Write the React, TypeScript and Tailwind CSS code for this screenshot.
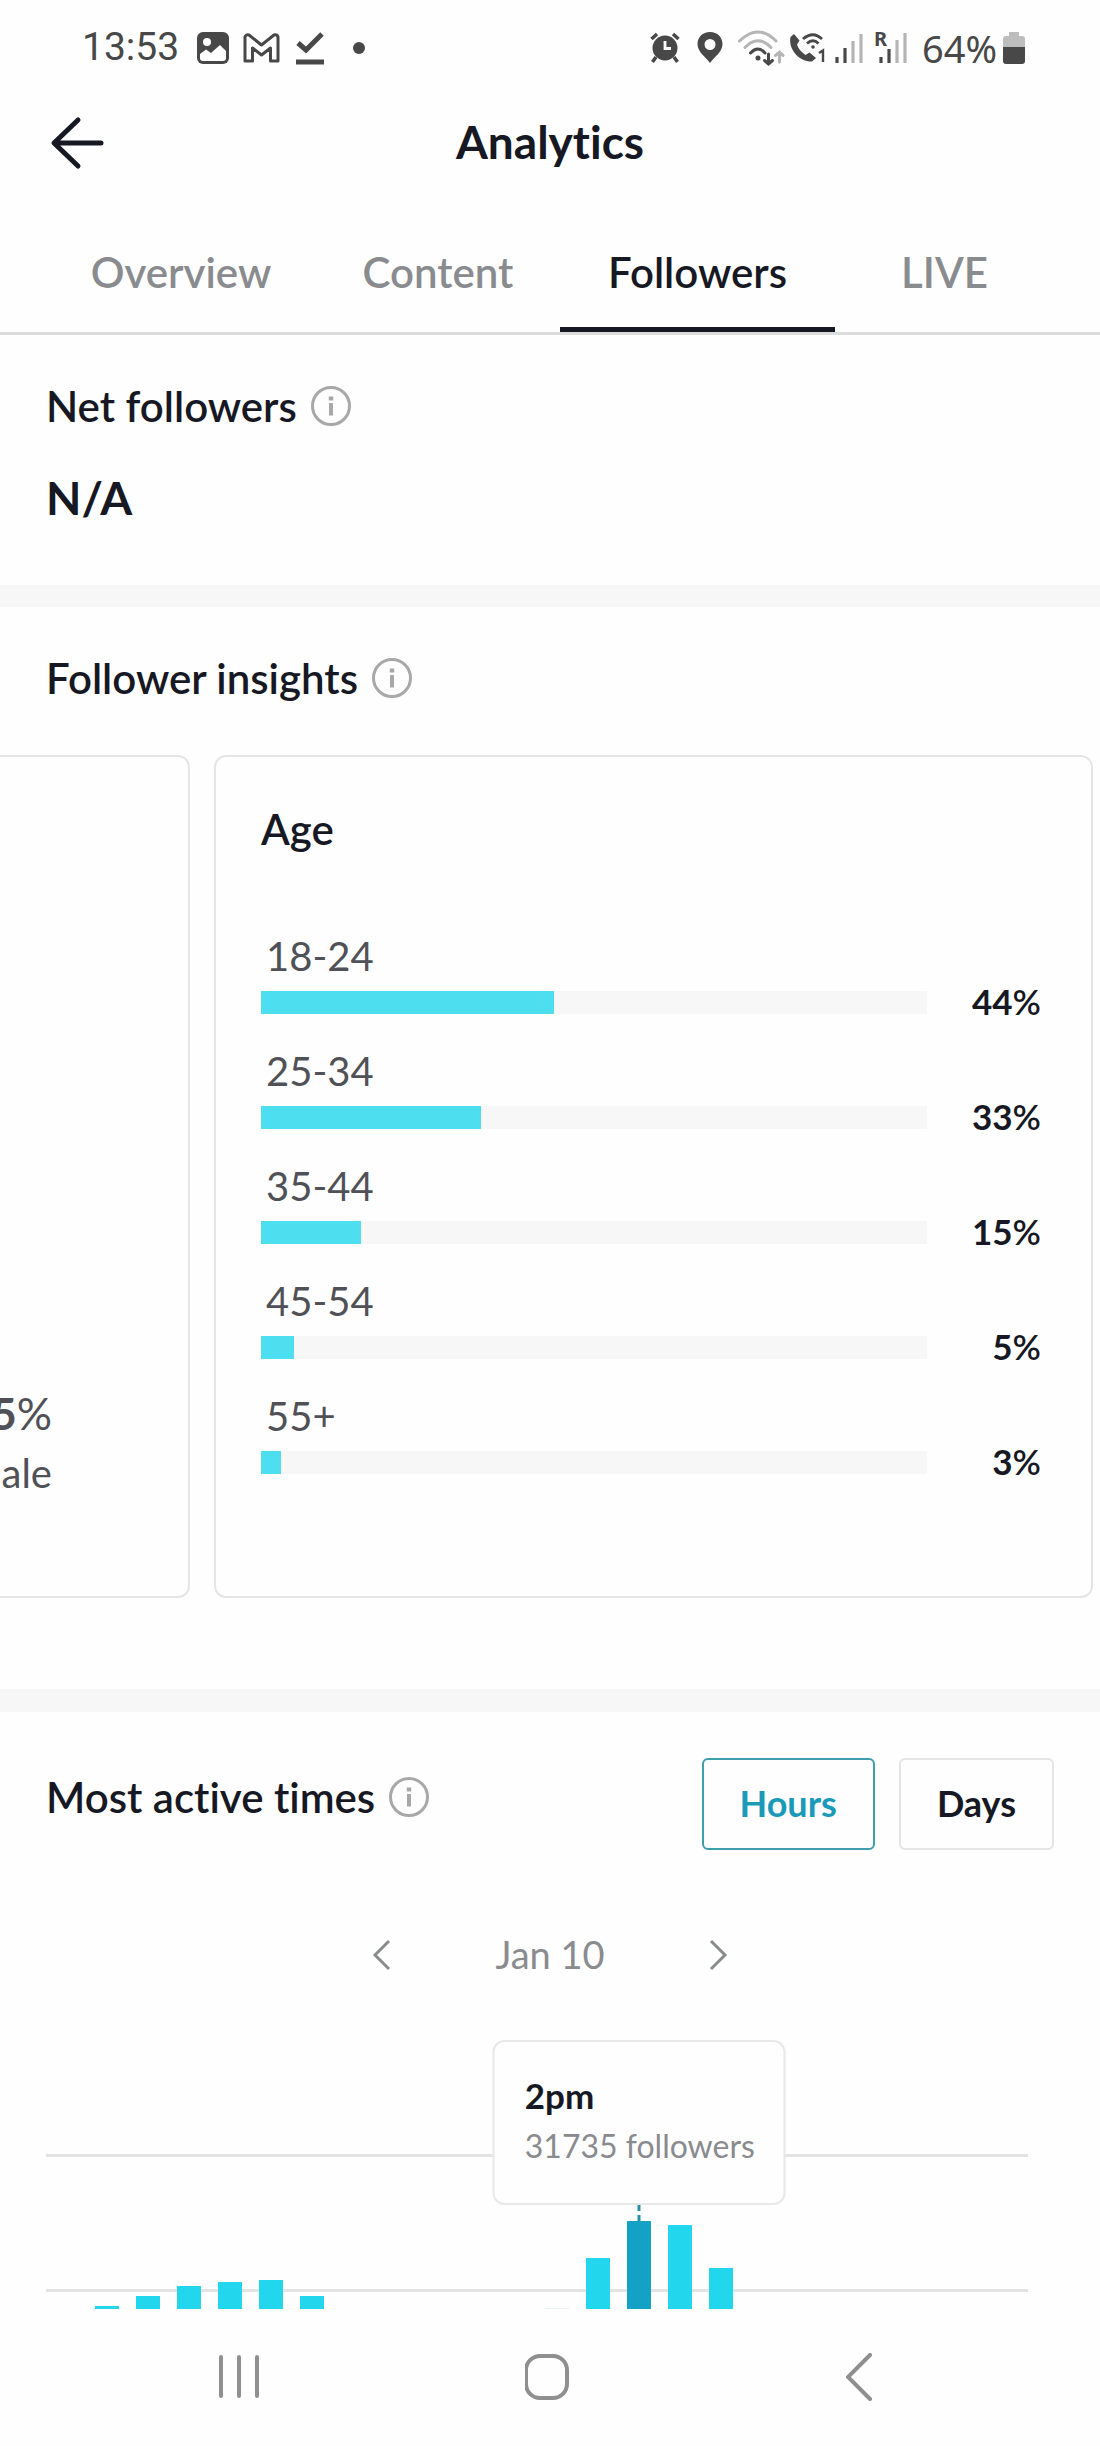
import { useState } from 'react'
import type { ReactNode } from 'react'

interface AgeGroup {
  label: string
  percent: number
}

interface HourBar {
  hour: number
  height: number
  tone: 'normal' | 'active' | 'faint'
}

const tabs = ['Overview', 'Content', 'Followers', 'LIVE']

const ageGroups: AgeGroup[] = [
  { label: '18-24', percent: 44 },
  { label: '25-34', percent: 33 },
  { label: '35-44', percent: 15 },
  { label: '45-54', percent: 5 },
  { label: '55+', percent: 3 },
]

const hourBars: HourBar[] = [
  { hour: 1, height: 3, tone: 'normal' },
  { hour: 2, height: 13, tone: 'normal' },
  { hour: 3, height: 23, tone: 'normal' },
  { hour: 4, height: 27, tone: 'normal' },
  { hour: 5, height: 29, tone: 'normal' },
  { hour: 6, height: 13, tone: 'normal' },
  { hour: 12, height: 1, tone: 'faint' },
  { hour: 13, height: 51, tone: 'normal' },
  { hour: 14, height: 88, tone: 'active' },
  { hour: 15, height: 84, tone: 'normal' },
  { hour: 16, height: 41, tone: 'normal' },
]

const barColors = {
  normal: 'bg-[#22d6ed]',
  active: 'bg-[#13a2c6]',
  faint: 'bg-[#e8f2f2]',
}

function StatusBar() {
  return (
    <div className="flex h-[95px] items-center justify-between pl-[82px] pr-[75px] text-[#484848]">
      <div className="flex items-center">
        <span className="mr-[18px] font-[Roboto] text-[39px] leading-none">13:53</span>
        {/* Gallery */}
        <svg width="32" height="32" viewBox="0 0 32 32" className="mr-[14px]">
          <rect width="32" height="32" rx="6" fill="currentColor" />
          <circle cx="10" cy="10" r="4" fill="#fff" />
          <path d="M3 22 L9 17.5 L14 21 L23 13 L29 19 V26 Q29 29 26 29 H6 Q3 29 3 26 Z" fill="#fff" />
        </svg>
        {/* Mail */}
        <svg width="37" height="30" viewBox="0 0 37 30" className="mr-[16px]" fill="none" stroke="currentColor" strokeWidth="3" strokeLinejoin="round">
          <path d="M2 28 V4 Q3 1 6 2 L18.500 12 L31 2 Q34 1 35 4 V28 H27.500 V15 L18.500 22 L9.500 15 V28 Z" />
        </svg>
        {/* Download complete */}
        <svg width="28" height="34" viewBox="0 0 28 34" className="mr-[29px]" fill="none" stroke="currentColor" strokeWidth="5">
          <path d="M2 12 L10 19 L26 3" />
          <path d="M0 31 H28" />
        </svg>
        <span className="h-3 w-3 rounded-full bg-current" />
      </div>
      <div className="flex items-center">
        {/* Alarm */}
        <svg width="30" height="31" viewBox="0 0 30 31" className="mr-[17px]" fill="none" stroke="currentColor">
          <circle cx="15" cy="16" r="12.500" fill="currentColor" stroke="none" />
          <path d="M1.500 7 L7 2 M28.500 7 L23 2 M6 25 L2.500 30 M24 25 L27.500 30" strokeWidth="3.500" />
          <path d="M15 9 V16.500 H21" stroke="#fff" strokeWidth="2.800" />
        </svg>
        {/* Location */}
        <svg width="26" height="31" viewBox="0 0 26 31" className="mr-[15px]">
          <path d="M13 0 C5.500 0 .5 5.500 .5 12 C.5 20 8 24 13 31 C18 24 25.500 20 25.500 12 C25.500 5.500 20.500 0 13 0 Z M13 7 A5.500 5.500 0 1 1 13 18 A5.500 5.500 0 1 1 13 7 Z" fill="currentColor" fillRule="evenodd" />
        </svg>
        {/* Wi-Fi */}
        <svg width="47" height="36" viewBox="0 0 47 36" className="mr-[4px]" fill="none" strokeLinecap="round" strokeWidth="3">
          <path d="M1.500 11 Q20 -7 38 11" stroke="#b5b5b5" />
          <path d="M7 17.500 Q20 4 33 17.500" stroke="#b5b5b5" />
          <path d="M12.500 23 Q20 15 27 23" stroke="currentColor" />
          <circle cx="20" cy="28" r="2.500" fill="currentColor" />
          <path d="M30.500 24 V34 M26.500 30.500 L30.500 34 L34.500 30.500" stroke="currentColor" />
          <path d="M41.500 32 V22 M37.500 25.500 L41.500 22 L45 25.500" stroke="#b5b5b5" />
        </svg>
        {/* Wi-Fi calling */}
        <svg width="37" height="30" viewBox="0 0 37 30" className="mr-[9px]" fill="none" stroke="currentColor" strokeWidth="2.800">
          <path d="M5 1 L1.500 4 C-1 16 10 29 23 28.500 L27 25 L20.500 19.500 L16.500 22 C12 19 9 15 8 11.500 L10.500 7.500 Z" fill="currentColor" stroke="none" />
          <path d="M14 6 Q24 -2.500 33 6 M18 10.500 Q24 5 29.500 10.500" />
          <circle cx="24" cy="14" r="1.800" fill="currentColor" stroke="none" />
          <path d="M30 20 L34 17.500 V29" strokeWidth="2.400" />
        </svg>
        {/* SIM 1 signal */}
        <svg width="30" height="30" viewBox="0 0 30 30" className="mr-[10px]" strokeWidth="3.200">
          <path d="M2 24 V30 M10 15 V30" stroke="currentColor" />
          <path d="M18 8 V30 M26 1 V30" stroke="#b5b5b5" />
        </svg>
        {/* SIM 2 signal, roaming */}
        <svg width="32" height="31" viewBox="0 0 32 31" className="mr-[15px] overflow-visible" fill="none" strokeWidth="3.200">
          <text x="-1" y="14" className="font-[Noto_Sans] text-[20px] font-bold" fill="currentColor">R</text>
          <path d="M6 25 V31 M14 17 V31" stroke="currentColor" />
          <path d="M22 8 V31 M30 1 V31" stroke="#b5b5b5" />
        </svg>
        <span className="mr-[6px] font-[Noto_Sans] text-[38px] leading-none">64%</span>
        {/* Battery */}
        <svg width="22" height="32" viewBox="0 0 22 32">
          <path d="M6 0 H16 V4 H19 Q22 4 22 7 V15 H0 V7 Q0 4 3 4 H6 Z" fill="#bdbdbd" />
          <path d="M0 15 H22 V29 Q22 32 19 32 H3 Q0 32 0 29 Z" fill="currentColor" />
        </svg>
      </div>
    </div>
  )
}

function InfoButton({ label }: { label: string }) {
  return (
    <button type="button" aria-label={label} className="text-[#a8a8a8]">
      <svg width="40" height="40" viewBox="0 0 40 40" fill="none" stroke="currentColor" strokeWidth="3">
        <circle cx="20" cy="20" r="18.500" />
        <path d="M20 17 V29.500" strokeWidth="4" />
        <path d="M20 10.500 V14.500" strokeWidth="4.500" />
      </svg>
    </button>
  )
}

function SectionTitle({ children, info }: { children: ReactNode; info: string }) {
  return (
    <div className="flex h-12 items-center gap-[14px]">
      <h2 className="text-[42px] leading-[48px] font-semibold">{children}</h2>
      <InfoButton label={info} />
    </div>
  )
}

function AgeCard() {
  return (
    <article className="mr-[7px] h-[843px] flex-1 rounded-xl border-2 border-[#e5e5e5] pt-[48px] pr-[50px] pl-[45px]">
      <h3 className="text-[42px] leading-[48px] font-semibold">Age</h3>
      <ul className="mt-[76px]">
        {ageGroups.map(group => (
          <li key={group.label} className="flex h-[115px] flex-col">
            <span className="pl-[5px] text-[40px] leading-[54px] text-[#505156]">{group.label}</span>
            <div className="flex h-[38px] items-center">
              <div className="h-[23px] flex-1 bg-[#f7f7f7]">
                <div className="h-full bg-[#4ddef0]" style={{ width: `${group.percent}%` }} />
              </div>
              <span className="w-[114px] pb-[2px] text-right text-[35px] leading-9 font-bold">
                {group.percent}<span className="font-semibold">%</span>
              </span>
            </div>
          </li>
        ))}
      </ul>
    </article>
  )
}

function ActivityChart() {
  return (
    <div className="relative mr-[72px] ml-[46px] h-[270px]">
      <div className="absolute inset-x-0 top-[115px] h-[3px] bg-[#e3e3e3]" />
      <div className="absolute inset-x-0 top-[250px] h-[3px] bg-[#e3e3e3]" />
      <div className="relative grid h-full grid-cols-24 items-end justify-items-center">
        {Array.from({ length: 24 }, (_, hour) => {
          const bar = hourBars.find(b => b.hour === hour)
          return (
            <div key={hour} className="relative">
              {bar && <div className={`w-6 ${barColors[bar.tone]}`} style={{ height: bar.height }} />}
              {bar?.tone === 'active' && (
                <div className="absolute bottom-full left-1/2 flex -translate-x-1/2 flex-col items-center">
                  <div className="w-[293px] rounded-xl border-2 border-[#e8e8e8] bg-[#fefefe] pt-[30px] pb-[32px] pl-[30px]">
                    <p className="text-[35px] leading-[46px] font-bold">2pm</p>
                    <p className="pt-[3px] text-[32px] leading-[50px] whitespace-nowrap text-[#8a8b8f]">31735 followers</p>
                  </div>
                  <div className="h-[16px] border-l-3 border-dashed border-[#298fa5]" />
                </div>
              )}
            </div>
          )
        })}
      </div>
    </div>
  )
}

function NavigationBar() {
  return (
    <nav className="grid h-[137px] grid-cols-3 items-center justify-items-center px-[84px] pb-[2px] text-[#8f8f8f]">
      <button type="button" aria-label="Recent apps">
        <svg width="46" height="48" viewBox="0 0 46 48" stroke="currentColor" strokeWidth="4" strokeLinecap="round">
          <path d="M5 4 V43 M23 4 V43 M41 4 V43" />
        </svg>
      </button>
      <button type="button" aria-label="Home">
        <svg width="50" height="48" viewBox="0 0 50 48" fill="none" stroke="currentColor" strokeWidth="4">
          <rect x="1" y="3" width="41" height="42" rx="14" />
        </svg>
      </button>
      <button type="button" aria-label="Back">
        <svg width="30" height="48" viewBox="0 0 30 48" fill="none" stroke="currentColor" strokeWidth="4" strokeLinecap="round">
          <path d="M24 2 L2 24 L24 46" />
        </svg>
      </button>
    </nav>
  )
}

export default function App() {
  const [activeTab, setActiveTab] = useState('Followers')
  const [range, setRange] = useState('Hours')

  return (
    <div className="w-full overflow-hidden bg-[#fefefe] font-[Lato,sans-serif] text-[#161823] [font-variant-ligatures:none]">
      <StatusBar />

      <header className="grid h-[96px] grid-cols-[1fr_auto_1fr] items-center px-[46px]">
        <button type="button" aria-label="Go back" className="justify-self-start">
          <svg width="60" height="56" viewBox="0 0 60 56" fill="none" stroke="currentColor" strokeWidth="5" strokeLinecap="round" strokeLinejoin="round">
            <path d="M32 5 L8 28 L32 51 M9 28 H55" />
          </svg>
        </button>
        <h1 className="pb-[2px] text-[46px] leading-[56px] font-bold">Analytics</h1>
      </header>

      <div role="tablist" className="grid h-[144px] grid-cols-[270fr_244fr_275fr_219fr] border-b-3 border-[#dcdcdc] px-[46px] pt-[26px]">
        {tabs.map(tab => (
          <button
            key={tab}
            type="button"
            role="tab"
            aria-selected={activeTab === tab}
            onClick={() => setActiveTab(tab)}
            className={`border-b-5 text-[42px] font-semibold ${
              activeTab === tab ? 'border-[#161823] text-[#161823]' : 'border-transparent text-[#8a8b8f]'
            }`}
          >
            {tab}
          </button>
        ))}
      </div>

      <section className="h-[250px] px-[46px] pt-[47px]">
        <SectionTitle info="About net followers">Net followers</SectionTitle>
        <p className="mt-[40px] text-[46px] leading-[56px] font-bold">N/A</p>
      </section>

      <div className="h-[22px] bg-[#f7f7f7]" />

      <section className="h-[1082px]">
        <div className="px-[46px] pt-[47px]">
          <SectionTitle info="About follower insights">Follower insights</SectionTitle>
        </div>
        <div className="mt-[53px] flex gap-[24px]">
          <article className="flex h-[843px] w-[190px] flex-none flex-col items-end overflow-hidden rounded-r-xl border-2 border-l-0 border-[#e5e5e5] pt-[626px] pr-[136px] text-[#505156]">
            <p className="text-[44px] leading-[60px]">
              <b>5</b>%
            </p>
            <p className="text-[40px] leading-[60px]">ale</p>
          </article>
          <AgeCard />
        </div>
      </section>

      <div className="h-[23px] bg-[#f7f7f7]" />

      <section>
        <div className="flex items-start justify-between px-[46px] pt-[46px]">
          <div className="pt-[15px]">
            <SectionTitle info="About most active times">Most active times</SectionTitle>
          </div>
          <div className="flex gap-[24px]">
            {['Hours', 'Days'].map(option => (
              <button
                key={option}
                type="button"
                aria-pressed={range === option}
                onClick={() => setRange(option)}
                className={`h-[92px] rounded-md border-2 px-[36px] pb-[3px] text-[36px] font-bold ${
                  range === option ? 'border-[#3f9dae] text-[#1a9ab8]' : 'border-[#e5e5e5] text-[#161823]'
                }`}
              >
                {option}
              </button>
            ))}
          </div>
        </div>

        <div className="mt-[79px] flex h-[52px] items-center justify-center gap-[103px] text-[#8a8b8f]">
          <button type="button" aria-label="Previous day">
            <svg width="20" height="34" viewBox="0 0 20 34" fill="none" stroke="currentColor" strokeWidth="3">
              <path d="M17 3 L3 17 L17 31" />
            </svg>
          </button>
          <span className="pb-[3px] text-[38px] leading-[52px]">Jan 10</span>
          <button type="button" aria-label="Next day">
            <svg width="20" height="34" viewBox="0 0 20 34" fill="none" stroke="currentColor" strokeWidth="3">
              <path d="M3 3 L17 17 L3 31" />
            </svg>
          </button>
        </div>

        <div className="pt-[58px]">
          <ActivityChart />
        </div>
      </section>

      <NavigationBar />
    </div>
  )
}
